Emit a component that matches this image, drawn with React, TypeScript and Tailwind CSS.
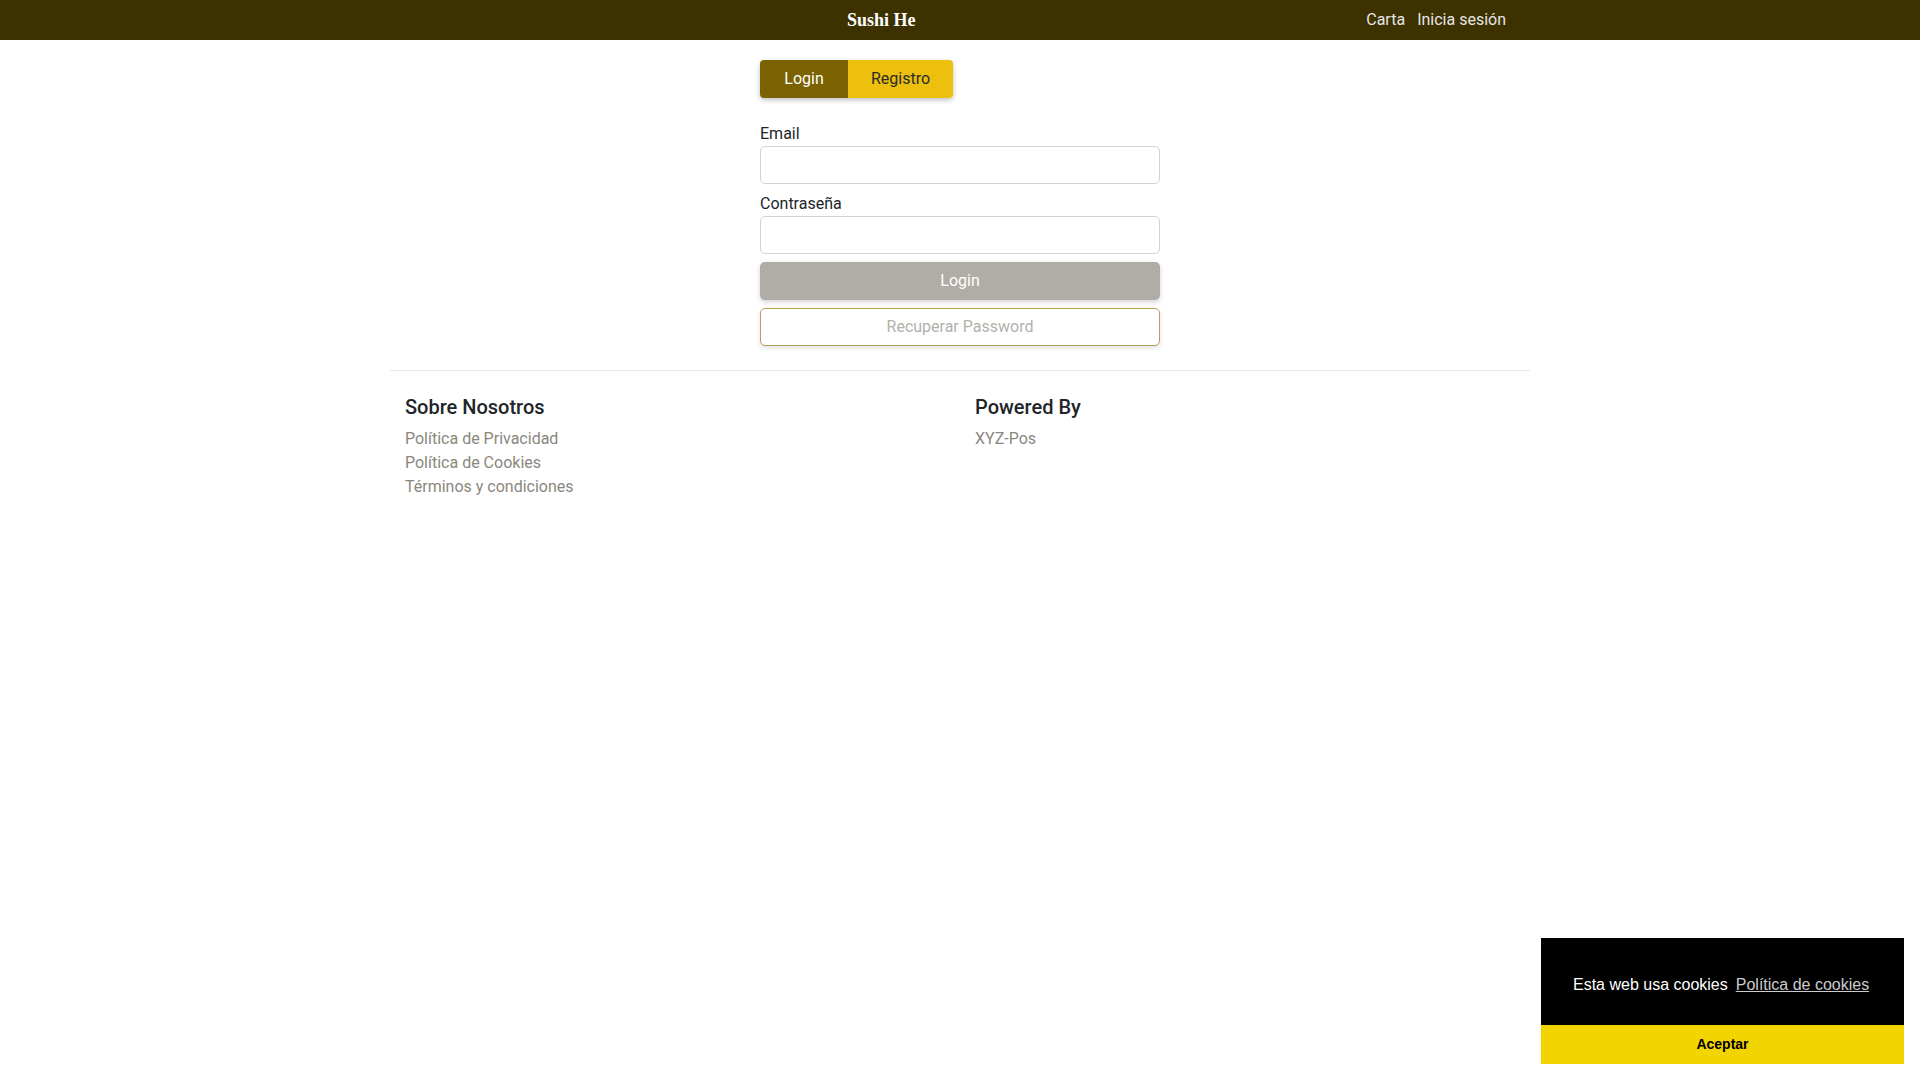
import React from 'react';

export default function App() {
  const aboutLinks = ['Política de Privacidad', 'Política de Cookies', 'Términos y condiciones'];

  return (
    <div className="min-h-screen bg-white font-['Roboto',sans-serif] text-[#212529]">
      <nav className="h-10 bg-[#3d3100]">
        <div className="mx-auto flex h-full w-[1140px] items-center px-6">
          <span className="ml-[433px] font-['Liberation_Serif',serif] text-[18px] font-bold text-white">Sushi He</span>
          <div className="ml-auto flex items-center gap-3 text-[16px] text-[#e6e6e6]">
            <a>Carta</a>
            <a>Inicia sesión</a>
          </div>
        </div>
      </nav>

      <main className="mx-auto mt-5 w-[400px]">
        <div className="flex w-fit overflow-hidden rounded-[4px] shadow-[0_2px_5px_rgba(0,0,0,0.25)]">
          <button className="h-[38px] w-[88px] bg-[#7a6200] text-[16px] text-white">Login</button>
          <button className="h-[38px] w-[105px] bg-[#ecc00c] text-[16px] text-[#2b2b2b]">Registro</button>
        </div>

        <form className="mt-6 flex flex-col">
          <label className="text-[16px] leading-6">Email</label>
          <input type="email" className="h-[38px] rounded-[5px] border border-[#ced4da] px-3 outline-none" />
          <label className="mt-2 text-[16px] leading-6">Contraseña</label>
          <input type="password" className="h-[38px] rounded-[5px] border border-[#ced4da] px-3 outline-none" />
          <button type="button" className="mt-2 h-[38px] rounded-[5px] bg-[#b0ada6] text-[16px] text-white shadow-[0_2px_5px_rgba(0,0,0,0.18)]">
            Login
          </button>
          <button type="button" className="mt-2 h-[38px] rounded-[5px] border border-[#b8a055] bg-white text-[16px] text-[#b3b1ab] shadow-[0_2px_5px_rgba(0,0,0,0.12)]">
            Recuperar Password
          </button>
        </form>
      </main>

      <footer className="mx-auto mt-6 w-[1140px] border-t border-[#e8e8e8] pt-6">
        <div className="grid grid-cols-2">
          <div className="px-[15px]">
            <h5 className="mb-2 text-[20px] font-medium leading-6">Sobre Nosotros</h5>
            <ul className="text-[16px] leading-6 text-[#8a877d]">
              {aboutLinks.map((l) => (
                <li key={l}>{l}</li>
              ))}
            </ul>
          </div>
          <div className="px-[15px]">
            <h5 className="mb-2 text-[20px] font-medium leading-6">Powered By</h5>
            <p className="text-[16px] leading-6 text-[#8a877d]">XYZ-Pos</p>
          </div>
        </div>
      </footer>

      <div className="fixed right-4 bottom-4 w-[363px] font-['Liberation_Sans',Arial,sans-serif]">
        <div className="flex h-[87px] items-center bg-black px-8 pt-[6px] text-[16px] text-white">
          <span>Esta web usa cookies</span>
          <a className="ml-2 text-[#cccccc] underline">Política de cookies</a>
        </div>
        <button className="h-[39px] w-full bg-[#f2d500] text-[14px] font-bold text-black">Aceptar</button>
      </div>
    </div>
  );
}
